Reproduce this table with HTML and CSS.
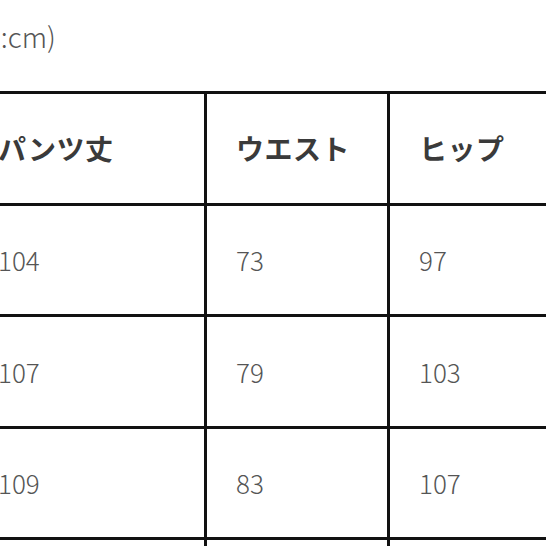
FILE: index.html
```html
<!DOCTYPE html>
<html lang="ja">
<head>
<meta charset="utf-8">
<title>サイズ表</title>
<link rel="stylesheet" href="styles.css">
</head>
<body>
<div class="page">
  <p class="note">(単位:cm)</p>
  <table class="size-table">
    <colgroup>
      <col class="c-first">
      <col class="c-col">
      <col class="c-col">
      <col class="c-col">
    </colgroup>
    <thead>
      <tr><th>パンツ丈</th><th>ウエスト</th><th>ヒップ</th><th>もも周り</th></tr>
    </thead>
    <tbody>
      <tr><td>104</td><td>73</td><td>97</td><td>58</td></tr>
      <tr><td>107</td><td>79</td><td>103</td><td>61</td></tr>
      <tr><td>109</td><td>83</td><td>107</td><td>63</td></tr>
      <tr><td>111</td><td>89</td><td>113</td><td>66</td></tr>
    </tbody>
  </table>
</div>
</body>
</html>
```

FILE: styles.css
```css
html, body {
  margin: 0;
  padding: 0;
  overflow: hidden;
  background: #ffffff;
}

.page {
  font-family: "Noto Sans CJK JP", "Noto Sans", sans-serif;
  width: 546px;
  height: 546px;
  overflow: hidden;
}

.note {
  margin: 17px 0 0 -64px;
  font-size: 28px;
  line-height: 38px;
  font-weight: 300;
  color: #555555;
  white-space: nowrap;
}

.size-table {
  margin: 36px 0 0 -34px;
  border-collapse: collapse;
  table-layout: fixed;
  width: 787px;
}

.c-first { width: 238px; }
.c-col { width: 183px; }

.size-table th,
.size-table td {
  border: 3px solid #111111;
  height: 108.5px;
  padding: 0 0 0 29px;
  text-align: left;
  vertical-align: middle;
  white-space: nowrap;
}

.size-table th {
  font-size: 28px;
  font-weight: 700;
  color: #3a3a3a;
  letter-spacing: 0.5px;
}

.size-table td {
  font-size: 26px;
  font-weight: 300;
  color: #555555;
}
```
